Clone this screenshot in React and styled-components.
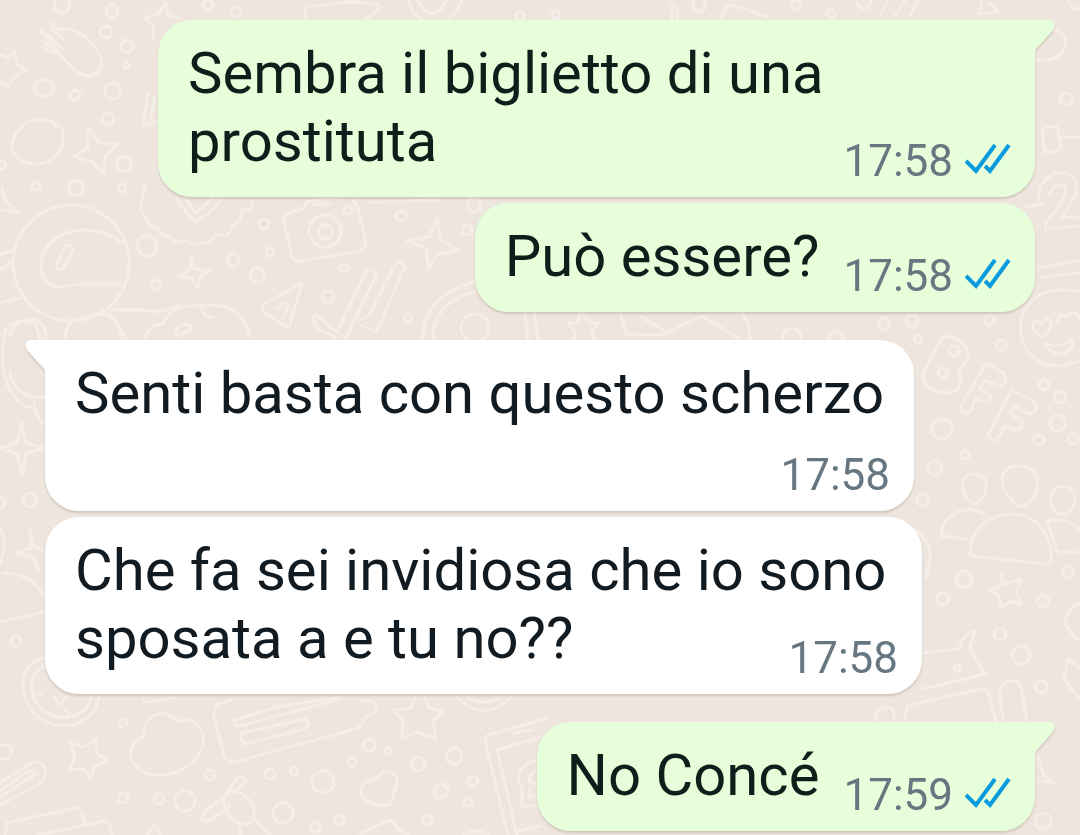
import styled, { createGlobalStyle } from 'styled-components'

const messages = [
  { id: 1, side: 'out', tail: true, layout: 'wrap', time: '17:58', text: 'Sembra il biglietto di una prostituta' },
  { id: 2, side: 'out', layout: 'row', time: '17:58', text: 'Può essere?' },
  { id: 3, side: 'in', tail: true, layout: 'below', time: '17:58', text: 'Senti basta con questo scherzo' },
  { id: 4, side: 'in', layout: 'wrap', time: '17:58', text: 'Che fa sei invidiosa che io sono sposata a e tu no??' },
  { id: 5, side: 'out', tail: true, layout: 'row', time: '17:59', text: 'No Concé' },
]

// [cx, cy, r]
const dots = [
  [62, 5, 8], [112, 11, 6], [106, 32, 6], [127, 46, 6], [126, 65, 3], [44, 88, 9], [75, 95, 5],
  [113, 91, 8], [108, 119, 6], [124, 164, 7], [36, 186, 4], [76, 188, 7], [122, 188, 4], [2, 165, 4],
  [208, 5, 5], [236, 12, 5], [264, 224, 5], [147, 246, 10], [233, 260, 6], [270, 252, 4],
  [257, 275, 7], [156, 285, 5], [344, 268, 4], [328, 297, 6], [401, 216, 5], [348, 210, 4],
  [408, 318, 4], [474, 205, 7], [467, 230, 5], [475, 328, 14], [1066, 99, 6],
  [520, 16, 4], [556, 15, 4], [796, 5, 5], [831, 14, 4], [792, 337, 9], [836, 338, 7],
  [884, 324, 6], [912, 321, 6], [989, 320, 5], [918, 339, 4], [1001, 345, 5],
  [1044, 385, 5], [1060, 397, 6], [1058, 423, 8], [1039, 440, 5], [1073, 439, 5], [942, 429, 10],
  [965, 455, 4], [935, 468, 7], [923, 500, 6], [30, 500, 7], [0, 503, 5], [16, 641, 5],
  [964, 579, 8], [943, 599, 6], [1043, 601, 6], [1068, 572, 6], [1000, 634, 6], [1021, 655, 9],
  [1041, 687, 6], [957, 668, 3], [123, 723, 4], [123, 798, 5], [159, 799, 5], [185, 801, 10],
  [210, 775, 5], [270, 774, 5], [283, 813, 10], [294, 771, 4], [323, 782, 11], [339, 820, 5],
  [352, 762, 4], [369, 745, 6], [388, 751, 3], [418, 764, 7], [454, 756, 8], [441, 791, 7],
  [473, 781, 5], [468, 802, 4], [427, 820, 5], [315, 827, 5], [1043, 821, 8],
]

const shapes = [
  // fork and spoon
  'M40 30L58 52Q76 76 90 76Q104 72 101 58C94 38 74 27 58 29L50 23M44 42L54 51M47 34L60 47M52 29L64 40M42 47L55 54',
  // stars
  'M0 55L8 58L15 51L17 64L26 70L16 75L8 87L0 82',
  'M145 18L158 14L166 3L168 15L178 18M145 18L154 26L153 38',
  'M568 322L577 324L581 310L588 322L599 324L592 331L594 342M568 322L575 332L573 342',
  'M1002 573L1004 584L1021 580L1016 592L1021 604L1011 601L1001 608L999 596L989 590L1000 586Z',
  'M70 743L83 747L96 740L97 753L108 761L95 766L91 778L83 769L69 770L75 758Z',
  'M415 697L411 708L394 710L403 722L402 739L416 732L436 739L433 720L444 712L429 708L424 697',
  // sparkles
  'M88 127L99 143L118 144L105 156L104 174L92 161L74 157L88 147Z',
  'M191 257L195 269L210 271L200 276L198 288L192 279L178 276L190 270Z',
  'M437 219L440 239L459 251L438 254L428 269L427 249L407 241L429 237Z',
  'M0 210L19 212L6 202L2 188',
  'M22 423L26 443L43 448L26 454L22 474L17 454L0 448L17 443Z',
  'M30 530L33 545L42 550M30 530L31 548L17 553L34 557L38 571',
  'M147 835L154 825L161 835M1038 758L1044 776L1054 783L1038 781',
  // clouds
  'M20 129Q26 117 41 121Q53 118 56 126Q64 124 63 141Q59 162 38 164Q14 164 12 146Q12 136 20 129Z',
  'M143 737C143 710 169 708 177 722C199 714 207 735 202 748C194 768 174 776 154 775C130 772 121 747 143 737Z',
  // moon ball
  'M71 205a58 58 0 1 0 .1 0M122 243C98 224 67 227 49 244C34 264 42 285 57 287L80 284H120M56 267L65 247Q72 242 73 250L64 267Q59 272 56 267Z',
  'M0 303L24 297M0 254L14 250M0 270L12 262M110 310L142 310Q160 314 180 306M10 335Q16 317 35 320Q47 325 46 338M65 338Q67 318 84 318Q112 305 125 338M102 315Q116 308 121 338',
  // badge with heart
  'M146 184L142 198Q138 210 146 218Q149 227 158 228Q160 238 170 236Q173 246 185 240Q197 247 202 242Q211 246 216 234Q229 240 231 227Q242 222 242 210Q255 211 251 200M177 198Q184 212 196 221Q213 213 222 198M185 198L196 213L213 198',
  // paper planes and triangles
  'M148 92L143 126L158 121M155 98L151 118',
  'M302 283L264 304Q259 309 266 314L289 328ZM276 308L286 303M282 318L289 306',
  // camera
  'M284 215L304 208L306 202L350 195L358 208L366 242Q366 250 359 251L301 261Q294 263 292 256L284 223ZM325 215a16 16 0 1 0 .1 0M325 225a7 7 0 1 0 .1 0M314 205L329 203M370 202L439 200',
  // double tick
  'M315 314L337 332L366 272Q373 266 376 276L346 338L342 335M315 314Q311 323 319 329L335 337M360 320L369 316L394 266Q399 257 405 267L376 332L361 325',
  // rings and cake
  'M423 340Q422 296 476 281M433 340Q432 303 476 291M525 312L528 340M534 312L538 340M145 338Q148 325 163 324Q171 305 194 306Q217 303 232 309Q247 320 250 336M176 332Q177 322 192 326Q190 332 176 336M202 308Q203 318 213 317',
  // envelope in a circle
  'M620 312L626 334L662 335L702 316L738 338M640 316L666 332M742 312Q750 324 750 340',
  // top edge
  'M305 20V9Q308 5 316 6L356 1M350 2L376 4Q384 7 374 13L366 19M408 0Q412 14 422 19M418 0Q432 27 447 0M462 0Q458 12 450 18M672 19V6Q675 2 677 8V19M693 0V8Q699 16 705 8V0M722 19Q724 5 734 5L768 17',
  // right side, beside the first bubble
  'M1050 28Q1064 30 1066 43Q1061 62 1038 60M1042 132Q1042 127 1050 127H1057L1061 147Q1060 152 1045 152ZM1061 137H1080',
  'M1039 199Q1038 180 1056 173Q1080 171 1076 194L1062 217L1080 218M1050 195Q1052 183 1065 186Q1070 197 1046 222L1045 229L1080 226M1026 207L1044 203M1040 268L1080 260M1041 277L1080 273',
  'M856 0Q858 12 869 7L871 0M880 15L888 0M895 16L905 0M910 16L918 0M982 0L979 14L998 12M990 4Q996 8 998 12M1068 0Q1072 12 1080 9',
  // smiley
  'M1080 292C1038 282 1014 309 1022 339Q1030 366 1060 366L1080 361M1033 330Q1031 316 1041 324Q1049 313 1051 325Q1048 337 1040 337ZM1058 324Q1057 311 1066 317Q1075 308 1080 319M1044 344Q1062 349 1071 339Q1077 351 1060 354Q1051 353 1044 344Z',
  // BFF
  'M941 340Q947 333 958 340Q973 349 966 361Q962 368 958 369Q966 386 952 392Q941 396 929 387Q920 381 924 371ZM954 346a5 5 0 1 0 .1 0M943 368a5 5 0 1 0 .1 0',
  'M986 363L1004 373Q1009 380 1001 387L985 380L980 389L991 395Q990 404 983 402L975 399L971 411Q965 417 960 408Z',
  'M1012 390L1035 402Q1040 411 1029 414L1014 406L1010 413L1022 421Q1022 433 1010 428L1004 426L1000 437Q992 444 988 435Z',
  // people
  'M1019 466C1042 466 1041 492 1031 501Q1020 512 1011 500C997 482 999 466 1019 466ZM974 474C991 474 988 494 979 502Q972 506 966 497C959 485 963 474 974 474ZM1064 486C1078 487 1077 505 1068 513Q1060 517 1053 508C1047 495 1054 486 1064 486Z',
  'M970 553C971 527 991 514 1012 514C1037 514 1054 536 1051 561Q1051 565 1045 564L974 556Q970 556 970 553ZM984 514C963 503 942 516 941 536L967 539M1047 521Q1069 517 1080 530M1047 521L1057 551L1080 553',
  // rocket, box and phone on the right
  'M1080 603Q1066 609 1065 623L1074 637L1080 640M1080 668L1068 659L1064 680L1080 699M923 653L960 649Q961 635 975 631L970 648L985 674L923 689M904 722L908 705L982 689Q990 690 990 700L996 722M914 530Q932 540 930 560L926 577',
  'M1003 722L1000 694Q1001 681 1012 681Q1021 681 1022 692L1027 722M876 722Q874 709 884 707Q896 706 894 719',
  // lamp on the left
  'M5 330Q20 315 36 325L40 340M5 330Q-2 372 12 393Q23 410 34 407M10 372Q15 400 45 397M34 402Q36 418 43 424M0 528Q8 544 0 563M4 573Q31 573 43 595M0 622L44 612',
  // clock
  'M45 658C21 660 16 692 34 713C54 735 94 728 99 697M45 666C31 671 26 690 39 707C58 726 88 717 91 697M35 694H41M54 697L59 705L66 697M66 710L71 716',
  // pen and cards at the bottom left
  'M0 783L30 764Q42 758 46 771Q45 780 36 786L0 805M0 791L28 771Q34 769 36 774L0 797M0 745H8Q15 750 8 759H0',
  'M5 835L7 823L76 808Q83 810 85 823M38 835L104 821Q112 823 112 835M143 698L145 702L174 698',
  // ticket
  'M232 700L218 704Q213 708 214 718L224 755Q226 763 235 762L359 728L366 717L378 710L373 702L361 700M234 720L277 707L341 697M234 720Q234 726 240 726L340 699M241 733L305 719Q313 722 304 729L246 744Q240 742 241 733Z',
  // magnifier
  'M231 791L208 809Q199 817 203 821L212 819L230 806M228 791L239 777Q244 775 246 781L235 792M225 794C218 808 238 833 252 821C262 804 236 783 225 794ZM240 828L241 835M254 818L270 835',
  // heart
  'M361 792Q361 780 374 780L383 772Q397 770 397 782L391 804Q381 808 371 802Q362 800 361 792Z',
  'M457 697Q484 724 511 697M468 697Q484 707 500 697M360 833L391 820L399 830L408 835',
  // poster
  'M548 718L488 735Q484 738 486 745L508 835M540 737L497 750L517 835M515 733L532 730M540 761Q520 760 518 780L522 788V807L540 805M540 769Q529 772 529 781L536 785M530 789V797L540 795M515 832L540 826M464 835Q476 827 488 835',
]

const Doodles = () => (
  <Pattern aria-hidden='true'>
    {dots.map(([cx, cy, r]) => <circle key={`${cx}-${cy}`} cx={cx} cy={cy} r={r} />)}
    {shapes.map((d) => <path key={d} d={d} />)}
  </Pattern>
)

const Ticks = () => (
  <TickIcon viewBox='0 0 46 36' role='img' aria-label='Letto'>
    <path d='M1 18L11 28L30 2M20 23L25 28L44 2' />
  </TickIcon>
)

const Tail = ({ side }) => (
  <TailIcon $side={side} viewBox='0 0 22 34' aria-hidden='true'>
    <path d='M0 0H17Q24 2 20 10L2 30V34H0Z' />
  </TailIcon>
)

const Message = ({ side, tail, layout, time, text }) => (
  <Bubble $side={side} $tail={tail} $layout={layout}>
    {tail && <Tail side={side} />}
    <Text $layout={layout}>{text}</Text>
    <Meta $layout={layout}>
      <time>{time}</time>
      {side === 'out' && <Ticks />}
    </Meta>
  </Bubble>
)

const App = () => {
  return <>
    <GlobalStyle />
    <Chat>
      <Doodles />
      {messages.map(({ id, ...message }) => <Message key={id} {...message} />)}
    </Chat>
  </>
}

const GlobalStyle = createGlobalStyle`
  * {
    box-sizing: border-box;
  }
  body {
    margin: 0;
    background: #eee6de;
    font-family: Roboto, sans-serif;
  }
`

const Chat = styled.main`
  position: relative;
  isolation: isolate;
  display: flex;
  flex-direction: column;
  gap: 6px;
  min-height: 100vh;
  padding: 20px 45px 4px;
  overflow: hidden;
`

const Pattern = styled.svg`
  position: absolute;
  inset: 0;
  z-index: -1;
  width: 100%;
  height: 100%;
  fill: none;
  stroke: #f5ede7;
  stroke-width: 3px;
  stroke-linecap: round;
  stroke-linejoin: round;
`

const bubbleDisplay = {
  wrap: 'display: flow-root;',
  row: 'display: flex; align-items: flex-end;',
  below: 'display: flex; flex-direction: column;',
}

const Bubble = styled.article`
  position: relative;
  ${({ $layout }) => bubbleDisplay[$layout]}
  align-self: ${({ $side }) => ($side === 'out' ? 'flex-end' : 'flex-start')};
  max-width: calc(100% - 113px);
  padding: 19px 24px 10px 30px;
  border-radius: 34px;
  border-top-left-radius: ${({ $side, $tail }) => ($tail && $side === 'in' ? '0' : '34px')};
  border-top-right-radius: ${({ $side, $tail }) => ($tail && $side === 'out' ? '0' : '34px')};
  background: ${({ $side }) => ($side === 'out' ? '#e6ffda' : '#ffffff')};
  color: ${({ $side }) => ($side === 'out' ? '#0d1f1a' : '#111b21')};
  filter: drop-shadow(0 2px 1px rgba(90, 70, 50, 0.2));

  article + & {
    margin-top: ${({ $tail }) => ($tail ? '22px' : '0')};
  }
`

const TailIcon = styled.svg`
  position: absolute;
  top: 0;
  ${({ $side }) => ($side === 'out' ? 'left: calc(100% - 2px);' : 'right: calc(100% - 2px); transform: scaleX(-1);')}
  width: 22px;
  height: 34px;
  fill: ${({ $side }) => ($side === 'out' ? '#e6ffda' : '#ffffff')};
`

const Text = styled.p`
  display: ${({ $layout }) => ($layout === 'wrap' ? 'inline' : 'block')};
  margin: 0;
  padding: 0 6px 12px 0;
  font-size: 58px;
  line-height: 68px;
`

const metaMargin = {
  wrap: '28px 0 0 18px',
  row: '0 0 0 18px',
  below: '10px 0 0',
}

const Meta = styled.footer`
  float: right;
  display: flex;
  flex: none;
  align-items: center;
  justify-content: flex-end;
  gap: 12px;
  margin: ${({ $layout }) => metaMargin[$layout]};
  color: #667781;
  font-size: 44px;
  line-height: 52px;
`

const TickIcon = styled.svg`
  width: 46px;
  height: 36px;
  fill: none;
  stroke: #0a9ade;
  stroke-width: 4px;
`

export default App
